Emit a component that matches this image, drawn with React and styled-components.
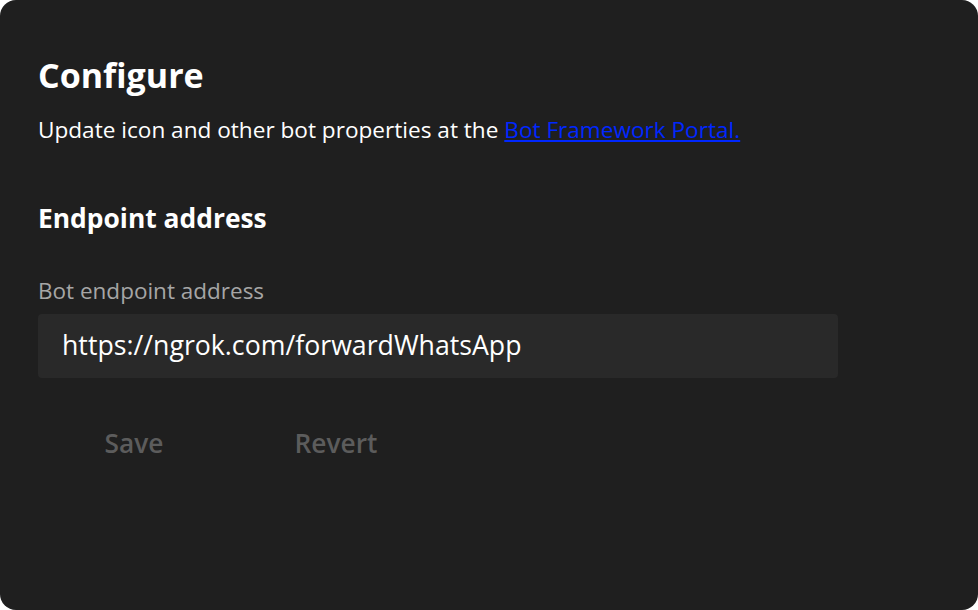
import React from 'react';
import styled, { createGlobalStyle } from 'styled-components';

const GlobalStyle = createGlobalStyle`
	html, body {
		margin: 0;
		padding: 0;
		background: #ffffff;
	}
	body {
		font-family: 'Segoe UI', 'Open Sans', 'Noto Sans', sans-serif;
	}
`;

const App = () => (
	<>
		<GlobalStyle />
		<Panel>
			<Title>Configure</Title>
			<Intro>
				Update icon and other bot properties at the{' '}
				<PortalLink href="#">Bot Framework Portal.</PortalLink>
			</Intro>
			<SectionTitle>Endpoint address</SectionTitle>
			<Field>
				<FieldLabel htmlFor="endpoint">Bot endpoint address</FieldLabel>
				<TextInput id="endpoint" defaultValue="https://ngrok.com/forwardWhatsApp" />
			</Field>
			<Actions>
				<ActionButton disabled>Save</ActionButton>
				<ActionButton disabled>Revert</ActionButton>
			</Actions>
		</Panel>
	</>
);

const Panel = styled.div`
	box-sizing: border-box;
	width: 978px;
	height: 610px;
	background: #1f1f1f;
	border-radius: 16px;
	padding: 50px 38px 0;
	color: #ffffff;
	display: flex;
	flex-direction: column;
`;

const Title = styled.h1`
	margin: 0;
	font-size: 34px;
	font-weight: 700;
	line-height: 50px;
`;

const Intro = styled.p`
	margin: 15px 0 0;
	font-size: 22.6px;
	line-height: 30px;
`;

const PortalLink = styled.a`
	color: #0027ff;
	text-decoration: underline;
`;

const SectionTitle = styled.h2`
	margin: 56px 0 0;
	font-size: 26.4px;
	font-weight: 700;
	line-height: 34px;
`;

const Field = styled.div`
	display: flex;
	flex-direction: column;
	margin-top: 42px;
	width: 800px;
`;

const FieldLabel = styled.label`
	font-size: 22.5px;
	line-height: 28px;
	color: #a6a6a6;
	margin-bottom: 9px;
`;

const TextInput = styled.input`
	box-sizing: border-box;
	height: 64px;
	border: none;
	border-radius: 4px;
	background: #292929;
	color: #ffffff;
	font: inherit;
	font-size: 26.7px;
	padding: 0 24px 3px;
	outline: none;
`;

const Actions = styled.div`
	display: flex;
	gap: 10px;
	margin-top: 37px;
`;

const ActionButton = styled.button`
	width: 192px;
	height: 56px;
	border: none;
	background: transparent;
	font: inherit;
	font-size: 26.3px;
	font-weight: 600;
	color: #5c5c5c;
	cursor: pointer;

	&:disabled {
		cursor: default;
	}
`;

export default App;
